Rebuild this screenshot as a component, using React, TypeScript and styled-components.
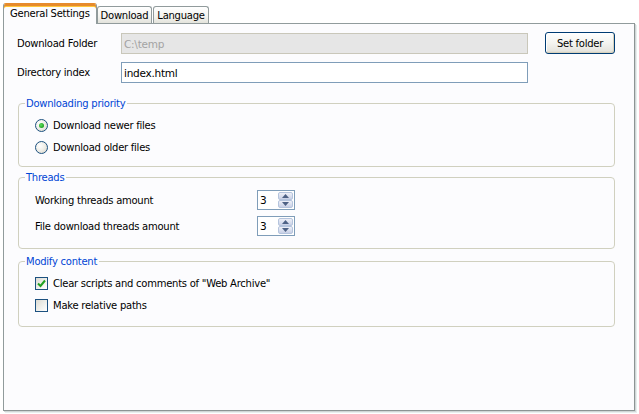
import React, { useState } from "react";
import styled, { createGlobalStyle } from "styled-components";

const FONT = `"DejaVu Sans", Verdana, sans-serif`;

const Global = createGlobalStyle`
  html, body { margin: 0; padding: 0; background: #ffffff; }
  body { font-family: ${FONT}; font-size: 10px; letter-spacing: -0.25px; color: #000; }
  * { box-sizing: border-box; }
`;

const Window = styled.div`
  width: 639px;
  height: 414px;
  padding: 2px 4px 0 3px;
  background: #ffffff;
  display: flex;
  flex-direction: column;
`;

const TabStrip = styled.div`
  display: flex;
  align-items: flex-end;
  height: 21px;
  position: relative;
  z-index: 2;
`;

const Tab = styled.div<{ $active?: boolean }>`
  height: ${(p) => (p.$active ? "21px" : "17px")};
  padding: ${(p) => (p.$active ? "0 6px 2px 6px" : "1px 3px 0 3px")};
  margin-right: ${(p) => (p.$active ? "0" : "1px")};
  margin-bottom: ${(p) => (p.$active ? "-1px" : "0")};
  display: flex;
  align-items: center;
  font-family: ${FONT};
  font-size: 10px;
  letter-spacing: -0.25px;
  color: #000;
  border: 1px solid #919b9c;
  border-bottom: none;
  border-radius: 3px 3px 0 0;
  background: ${(p) =>
    p.$active
      ? "#fcfcfe"
      : "linear-gradient(#ffffff 0%, #f3f3ef 60%, #e3e3dc 100%)"};
  box-shadow: ${(p) => (p.$active ? "inset 0 2px 0 #e68b2c, inset 0 3px 0 #ffc73c" : "none")};
  border-top-color: ${(p) => (p.$active ? "#e68b2c" : "#919b9c")};
`;

const Panel = styled.div`
  width: 632px;
  height: 388px;
  border: 1px solid #919b9c;
  border-right-color: #8c9494;
  border-bottom-color: #8c9494;
  box-shadow: 1px 1px 0 #d0d6d6, 2px 2px 0 #e8eeee;
  background: #fcfcfe;
  padding: 9px 0 0 13px;
  display: flex;
  flex-direction: column;
`;

const TopGrid = styled.div`
  display: grid;
  grid-template-columns: 87px 407px 70px;
  column-gap: 17px;
  row-gap: 8px;
  align-items: center;
`;

const Label = styled.span`
  font-size: 10px;
  color: #000;
  white-space: nowrap;
`;

const TextBox = styled.input<{ $disabled?: boolean }>`
  height: 21px;
  width: 100%;
  border: 1px solid ${(p) => (p.$disabled ? "#c9c7ba" : "#7f9db9")};
  background: ${(p) => (p.$disabled ? "#e6e6e6" : "#ffffff")};
  color: ${(p) => (p.$disabled ? "#a3a3a3" : "#000")};
  font-family: ${FONT};
  font-size: 10.5px;
  letter-spacing: -0.25px;
  padding: 0 2px;
  outline: none;
`;

const Button = styled.button`
  height: 22px;
  width: 70px;
  margin-top: -1px;
  border: 1px solid #003c74;
  border-radius: 3px;
  background: linear-gradient(#ffffff 0%, #f4f4f0 50%, #e6e5df 90%, #d6d0c5 100%);
  box-shadow: inset -1px -1px 0 #d8d2bd, inset 1px 1px 0 #fff;
  font-family: ${FONT};
  font-size: 10px;
  letter-spacing: -0.25px;
  color: #000;
  padding: 0;
`;

const Group = styled.fieldset<{ $top: number; $bottom: number }>`
  width: 597px;
  margin: ${(p) => p.$top}px 0 0 1px;
  border: 1px solid #d0d0bf;
  border-radius: 4px;
  padding: 0 0 ${(p) => p.$bottom}px 16px;
  display: flex;
  flex-direction: column;
  min-width: 0;
`;

const Legend = styled.legend`
  color: #0046d5;
  font-size: 10px;
  padding: 0 2px 0 1px;
  margin-left: -10px;
  line-height: 13px;
`;

const ChoiceRow = styled.label`
  height: 22px;
  display: flex;
  align-items: center;
  gap: 5px;
  font-size: 10px;
  color: #000;
`;

const RadioCircle = styled.span<{ $checked?: boolean }>`
  width: 13px;
  height: 13px;
  border-radius: 50%;
  border: 1px solid #1c5180;
  background: radial-gradient(circle at 35% 35%, #ffffff 0%, #f0efe9 45%, #d6d3c6 100%);
  display: flex;
  align-items: center;
  justify-content: center;
  flex: none;
  &::after {
    content: "";
    display: ${(p) => (p.$checked ? "block" : "none")};
    width: 5px;
    height: 5px;
    border-radius: 50%;
    background: radial-gradient(circle at 40% 40%, #5fe05f 0%, #21a121 70%);
  }
`;

const CheckSquare = styled.span`
  width: 13px;
  height: 13px;
  border: 1px solid #1c5180;
  background: linear-gradient(135deg, #dcdbd3 0%, #f2f2ee 60%, #ffffff 100%);
  display: flex;
  align-items: center;
  justify-content: center;
  flex: none;
`;

const ThreadRow = styled.div`
  height: 26px;
  display: flex;
  align-items: center;
`;

const ThreadLabel = styled.span`
  width: 222px;
  font-size: 10px;
  color: #000;
`;

const Spin = styled.div`
  width: 38px;
  height: 20px;
  border: 1px solid #7f9db9;
  background: #fff;
  display: flex;
  align-items: stretch;
  padding: 1px;
`;

const SpinValue = styled.span`
  flex: 1;
  font-size: 10.5px;
  padding-left: 1px;
  line-height: 16px;
`;

const SpinButtons = styled.div`
  width: 15px;
  display: flex;
  flex-direction: column;
`;

const SpinBtn = styled.div`
  flex: 1;
  border: 1px solid #b5c4dd;
  border-radius: 2px;
  background: linear-gradient(#eef0f8 0%, #c8d0e6 100%);
  display: flex;
  align-items: center;
  justify-content: center;
`;

const Arrow = ({ up }: { up?: boolean }) => (
  <svg width="7" height="4" viewBox="0 0 7 4">
    <path d={up ? "M0 4 L3.5 0 L7 4 Z" : "M0 0 L3.5 4 L7 0 Z"} fill="#4d6185" />
  </svg>
);

const SpinBox = ({ value }: { value: number }) => (
  <Spin>
    <SpinValue>{value}</SpinValue>
    <SpinButtons>
      <SpinBtn>
        <Arrow up />
      </SpinBtn>
      <SpinBtn>
        <Arrow />
      </SpinBtn>
    </SpinButtons>
  </Spin>
);

const Check = () => (
  <svg width="9" height="9" viewBox="0 0 9 9">
    <path d="M1 4.5 L3.5 7 L8 1.5" stroke="#21a121" strokeWidth="2" fill="none" />
  </svg>
);

export default function App() {
  const [newer, setNewer] = useState(true);
  return (
    <>
      <Global />
      <Window>
        <TabStrip>
          <Tab $active>General Settings</Tab>
          <Tab>Download</Tab>
          <Tab>Language</Tab>
        </TabStrip>
        <Panel>
          <TopGrid>
            <Label>Download Folder</Label>
            <TextBox $disabled disabled value="C:\temp" readOnly />
            <Button>Set folder</Button>
            <Label>Directory index</Label>
            <TextBox defaultValue="index.html" />
            <span />
          </TopGrid>

          <Group $top={14} $bottom={8}>
            <Legend>Downloading priority</Legend>
            <ChoiceRow onClick={() => setNewer(true)} style={{ marginTop: 4 }}>
              <RadioCircle $checked={newer} />
              Download newer files
            </ChoiceRow>
            <ChoiceRow onClick={() => setNewer(false)}>
              <RadioCircle $checked={!newer} />
              Download older files
            </ChoiceRow>
          </Group>

          <Group $top={4} $bottom={9}>
            <Legend>Threads</Legend>
            <ThreadRow style={{ marginTop: 3 }}>
              <ThreadLabel>Working threads amount</ThreadLabel>
              <SpinBox value={3} />
            </ThreadRow>
            <ThreadRow>
              <ThreadLabel>File download threads amount</ThreadLabel>
              <SpinBox value={3} />
            </ThreadRow>
          </Group>

          <Group $top={6} $bottom={10}>
            <Legend>Modify content</Legend>
            <ChoiceRow style={{ marginTop: 4 }}>
              <CheckSquare>
                <Check />
              </CheckSquare>
              Clear scripts and comments of "Web Archive"
            </ChoiceRow>
            <ChoiceRow>
              <CheckSquare />
              Make relative paths
            </ChoiceRow>
          </Group>
        </Panel>
      </Window>
    </>
  );
}
